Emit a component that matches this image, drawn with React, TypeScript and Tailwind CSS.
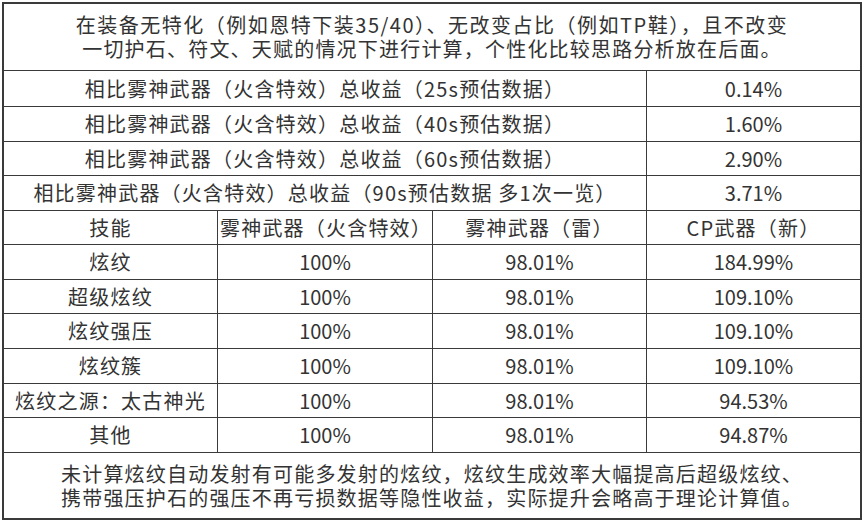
const font = { fontFamily: '"Noto Sans CJK SC", "Noto Sans", sans-serif' };

const totals = [
  { label: '相比雾神武器（火含特效）总收益（25s预估数据）', value: '0.14%', h: 'h-[36px]' },
  { label: '相比雾神武器（火含特效）总收益（40s预估数据）', value: '1.60%', h: 'h-[35px]' },
  { label: '相比雾神武器（火含特效）总收益（60s预估数据）', value: '2.90%', h: 'h-[34px]' },
  { label: '相比雾神武器（火含特效）总收益（90s预估数据 多1次一览）', value: '3.71%', h: 'h-[35px]' },
];

const skills = [
  { name: '炫纹', a: '100%', b: '98.01%', c: '184.99%', h: 'h-[35px]' },
  { name: '超级炫纹', a: '100%', b: '98.01%', c: '109.10%', h: 'h-[34px]' },
  { name: '炫纹强压', a: '100%', b: '98.01%', c: '109.10%', h: 'h-[35px]' },
  { name: '炫纹簇', a: '100%', b: '98.01%', c: '109.10%', h: 'h-[35px]' },
  { name: '炫纹之源：太古神光', a: '100%', b: '98.01%', c: '94.53%', h: 'h-[34px]' },
  { name: '其他', a: '100%', b: '98.01%', c: '94.87%', h: 'h-[35px]' },
];

const Cell = ({ children, last }: { children: React.ReactNode; last?: boolean }) => (
  <div
    className={`flex items-center justify-center whitespace-nowrap ${last ? '' : 'border-r border-[#3a3a3a]'}`}
  >
    {children}
  </div>
);

const App = () => {
  return (
    <div className="min-h-screen bg-white pt-[2px] pl-[2px] text-[#333]" style={font}>
      <div className="w-[860px] h-[518px] border-2 border-[#3a3a3a] flex flex-col text-[20px] tracking-[1.2px]">
        <div className="h-[67px] border-b border-[#3a3a3a] flex flex-col items-center justify-center text-center leading-[24px] pb-[1px]">
          <span className="block tracking-[1.5px]">在装备无特化（例如恩特下装35/40）、无改变占比（例如TP鞋），且不改变</span>
          <span className="block">一切护石、符文、天赋的情况下进行计算，个性化比较思路分析放在后面。</span>
        </div>

        {totals.map((row) => (
          <div key={row.label} className={`${row.h} border-b border-[#3a3a3a] grid grid-cols-[643px_1fr]`}>
            <Cell>{row.label}</Cell>
            <Cell last>
              <span className="tracking-normal">{row.value}</span>
            </Cell>
          </div>
        ))}

        <div className="h-[34px] border-b border-[#3a3a3a] grid grid-cols-[214px_215px_214px_1fr]">
          <Cell>技能</Cell>
          <Cell>
            <span className="pl-[2px]">雾神武器（火含特效）</span>
          </Cell>
          <Cell>雾神武器（雷）</Cell>
          <Cell last>CP武器（新）</Cell>
        </div>

        {skills.map((row) => (
          <div key={row.name} className={`${row.h} border-b border-[#3a3a3a] grid grid-cols-[214px_215px_214px_1fr]`}>
            <Cell>{row.name}</Cell>
            <Cell>
              <span className="tracking-normal">{row.a}</span>
            </Cell>
            <Cell>
              <span className="tracking-normal">{row.b}</span>
            </Cell>
            <Cell last>
              <span className="tracking-normal">{row.c}</span>
            </Cell>
          </div>
        ))}

        <div className="flex-1 flex flex-col items-center justify-center text-center leading-[24px]">
          <span className="block">未计算炫纹自动发射有可能多发射的炫纹，炫纹生成效率大幅提高后超级炫纹、</span>
          <span className="block">携带强压护石的强压不再亏损数据等隐性收益，实际提升会略高于理论计算值。</span>
        </div>
      </div>
    </div>
  );
};

export default App;
